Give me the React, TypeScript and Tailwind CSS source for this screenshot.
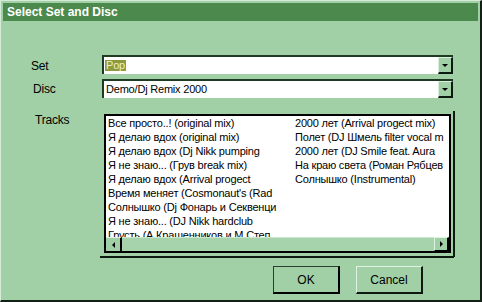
import React from 'react';

const left = [
  'Все просто..! (original mix)',
  'Я делаю вдох (original mix)',
  'Я делаю вдох (Dj Nikk pumping',
  'Я не знаю... (Грув break mix)',
  'Я делаю вдох (Arrival progect',
  "Время меняет (Cosmonaut's (Rad",
  'Солнышко (Dj Фонарь и Секвенци',
  'Я не знаю... (DJ Nikk hardclub',
  'Грусть (А.Крашенников и М.Степ',
];

const right = [
  '2000 лет (Arrival progect mix)',
  'Полет (DJ Шмель filter vocal m',
  '2000 лет (DJ Smile feat. Aura',
  'На краю света (Роман Рябцев',
  'Солнышко (Instrumental)',
];

const Arrow = ({ dir }: { dir: 'down' | 'left' | 'right' }) => {
  const pts = dir === 'down' ? '0,0 6,0 3,3' : dir === 'left' ? '3,0 3,6 0,3' : '0,0 0,6 3,3';
  const w = dir === 'down' ? 6 : 3;
  const h = dir === 'down' ? 3 : 6;
  return (
    <svg width={w} height={h} viewBox={`0 0 ${w} ${h}`}>
      <polygon points={pts} fill="#000" />
    </svg>
  );
};

const Combo = ({ value, selected }: { value: string; selected?: boolean }) => (
  <div className="flex h-[19px] w-[351px] border-t-2 border-l-2 border-t-[#1e3a22] border-l-[#1e3a22] bg-white">
    <div className="flex flex-1 items-center pl-[1px]">
      <span className={selected ? 'bg-[#8e9a3c] px-[1px] text-[#ecefc8]' : 'px-[1px] text-black'}>{value}</span>
    </div>
    <div className="flex w-[15px] items-center justify-center border-r-2 border-b-2 border-r-[#0d1a10] border-b-[#0d1a10] border-t border-l border-t-[#d8f0dc] border-l-[#d8f0dc] bg-[#a1cfa6]">
      <Arrow dir="down" />
    </div>
  </div>
);

const Btn = ({ label, def }: { label: string; def?: boolean }) => (
  <div
    className={
      'flex h-[28px] w-[67px] items-center justify-center bg-[#a1cfa6] text-black ' +
      (def
        ? 'border-t border-l border-t-[#2b3d2e] border-l-[#2b3d2e] border-r-2 border-b-2 border-r-black border-b-black'
        : 'border-t border-l border-t-[#dff3e2] border-l-[#dff3e2] border-r-2 border-b-2 border-r-[#0d1a10] border-b-[#0d1a10]')
    }
  >
    {label}
  </div>
);

export default function App() {
  return (
    <div
      className="relative h-[302px] w-[482px] overflow-hidden border-t border-l border-t-[#d6ecd8] border-l-[#d6ecd8] border-r-2 border-b-2 border-r-[#122016] border-b-[#122016] bg-[#a1cfa6] text-[11px] leading-none tracking-[-0.2px]"
      style={{ fontFamily: '"Liberation Sans", Arial, sans-serif' }}
    >
      <div className="mx-[2px] mt-[2px] flex h-[18px] items-center bg-[#4b8a4c] pl-[4px] text-[12px] font-bold tracking-normal text-white">
        Select Set and Disc
      </div>

      <div className="mt-[34px] flex flex-col">
        <div className="flex h-[19px] items-center">
          <div className="w-[101px] pl-[30px] pt-[3px] text-[12px]">Set</div>
          <Combo value="Pop" selected />
        </div>
        <div className="mt-[5px] flex h-[19px] items-center">
          <div className="w-[101px] pl-[32px] pt-[1px] text-[12px]">Disc</div>
          <Combo value="Demo/Dj Remix 2000" />
        </div>
        <div className="mt-[16px] flex">
          <div className="w-[103px] pl-[34px] text-[12px]">Tracks</div>
          <div className="relative">
            <div className="flex h-[139px] w-[347px] flex-col border-2 border-black bg-white">
              <div className="flex flex-1 overflow-hidden pl-[2px]">
                <div className="w-[187px] shrink-0 overflow-hidden">
                  {left.map((t) => (
                    <div key={t} className="h-[14px] whitespace-nowrap leading-[14px]">{t}</div>
                  ))}
                </div>
                <div className="overflow-hidden">
                  {right.map((t) => (
                    <div key={t} className="h-[14px] whitespace-nowrap leading-[14px]">{t}</div>
                  ))}
                </div>
              </div>
              <div className="flex h-[14px] bg-[#a1cfa6]">
                <div className="flex w-[16px] items-center justify-center border-r-2 border-r-black border-t border-t-[#dff3e2]">
                  <Arrow dir="left" />
                </div>
                <div className="flex-1 border-t border-t-[#c9e8cd] bg-[#a6d3ab]" />
                <div className="flex w-[15px] items-center justify-center border-l border-l-[#dff3e2] border-t border-t-[#dff3e2] border-r-2 border-r-black border-b border-b-black">
                  <Arrow dir="right" />
                </div>
              </div>
            </div>
            <div className="absolute top-[-3px] right-[-4px] h-[146px] w-[2px] bg-[#0d1a10]" />
            <div className="absolute bottom-[-5px] left-[-4px] h-[2px] w-[354px] bg-[#0d1a10]" />
          </div>
        </div>
        <div className="mt-[13px] flex gap-[16px] pl-[272px] text-[12px] tracking-normal">
          <Btn label="OK" def />
          <Btn label="Cancel" />
        </div>
      </div>
    </div>
  );
}
